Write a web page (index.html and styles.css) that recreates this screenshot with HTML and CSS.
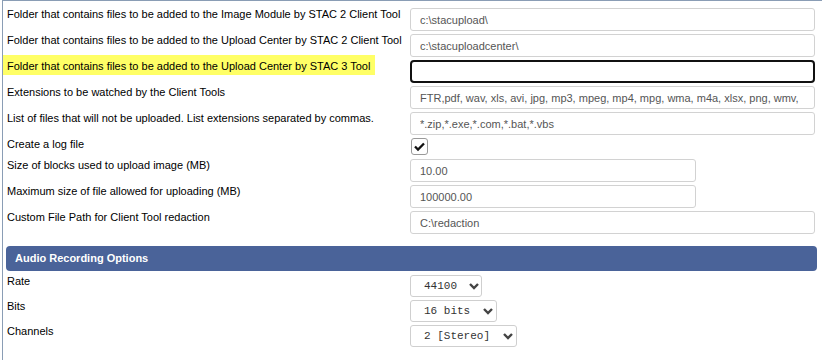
FILE: index.html
```html
<!DOCTYPE html>
<html lang="en">
<head>
    <meta charset="UTF-8">
    <meta name="viewport" content="width=device-width, initial-scale=1.0">
    <link rel="stylesheet" href="styles.css">
    <title>Client Tool Settings</title>
</head>
<body>
    <div class="panel">

        <div class="row">
            <label for="image-folder">Folder that contains files to be added to the Image Module by STAC 2 Client Tool</label>
            <input type="text" id="image-folder" class="field" value="c:\stacupload\">
        </div>

        <div class="row">
            <label for="upload-folder">Folder that contains files to be added to the Upload Center by STAC 2 Client Tool</label>
            <input type="text" id="upload-folder" class="field" value="c:\stacuploadcenter\">
        </div>

        <div class="row">
            <label for="stac3-folder"><span class="highlight">Folder that contains files to be added to the Upload Center by STAC 3 Tool</span></label>
            <input type="text" id="stac3-folder" class="field focused" value="">
        </div>

        <div class="row">
            <label for="watched">Extensions to be watched by the Client Tools</label>
            <input type="text" id="watched" class="field clip" value="FTR,pdf, wav, xls, avi, jpg, mp3, mpeg, mp4, mpg, wma, m4a, xlsx, png, wmv, mov, doc, docx">
        </div>

        <div class="row">
            <label for="excluded">List of files that will not be uploaded. List extensions separated by commas.</label>
            <input type="text" id="excluded" class="field" value="*.zip,*.exe,*.com,*.bat,*.vbs">
        </div>

        <div class="row row-check">
            <label>Create a log file</label>
            <span class="check">
                <svg width="17" height="17" viewBox="0 0 17 17"><path d="M4 8.5 L7 11.5 L13 5.5" fill="none" stroke="#111" stroke-width="2.3"/></svg>
            </span>
        </div>

        <div class="row">
            <label for="block-size">Size of blocks used to upload image (MB)</label>
            <input type="text" id="block-size" class="field short" value="10.00">
        </div>

        <div class="row">
            <label for="max-size">Maximum size of file allowed for uploading (MB)</label>
            <input type="text" id="max-size" class="field short" value="100000.00">
        </div>

        <div class="row">
            <label for="redaction">Custom File Path for Client Tool redaction</label>
            <input type="text" id="redaction" class="field" value="C:\redaction">
        </div>

        <div class="section-head">Audio Recording Options</div>

        <div class="row row-select">
            <label for="rate">Rate</label>
            <span class="select-wrap rate">
                <select id="rate"><option>44100</option><option>22050</option></select>
                <svg class="chev" width="10" height="7" viewBox="0 0 10 7"><path d="M1 1 L5 5 L9 1" fill="none" stroke="#444" stroke-width="2.4"/></svg>
            </span>
        </div>

        <div class="row row-select">
            <label for="bits">Bits</label>
            <span class="select-wrap bits">
                <select id="bits"><option>16 bits</option><option>8 bits</option></select>
                <svg class="chev" width="10" height="7" viewBox="0 0 10 7"><path d="M1 1 L5 5 L9 1" fill="none" stroke="#444" stroke-width="2.4"/></svg>
            </span>
        </div>

        <div class="row row-select">
            <label for="channels">Channels</label>
            <span class="select-wrap channels">
                <select id="channels"><option>2 [Stereo]</option><option>1 [Mono]</option></select>
                <svg class="chev" width="10" height="7" viewBox="0 0 10 7"><path d="M1 1 L5 5 L9 1" fill="none" stroke="#444" stroke-width="2.4"/></svg>
            </span>
        </div>

    </div>
</body>
</html>
```

FILE: styles.css
```css
* {
  box-sizing: border-box;
  margin: 0;
  padding: 0;
}

body {
  font-family: "Liberation Sans", Arial, sans-serif;
  font-size: 11px;
  color: #000;
  background: #fff;
}

.panel {
  margin-left: 2px;
  height: 360px;
  border-left: 1px solid #8a9db5;
  border-top: 1px solid #8a9db5;
  padding: 7px 7px 0 4px;
}

.row {
  display: grid;
  grid-template-columns: 403px 1fr;
  align-items: start;
  margin-bottom: 3px;
}

.row label {
  line-height: 13px;
  white-space: nowrap;
}

.highlight {
  display: inline-block;
  background: #ffff66;
  margin: -5px 0 0 -4px;
  padding: 5px 5px 2px 4px;
}

.field {
  font-family: "Liberation Sans", Arial, sans-serif;
  font-size: 11px;
  color: #555;
  height: 23px;
  width: 100%;
  border: 1px solid #d2d2d2;
  border-radius: 3px;
  padding: 0 8px 0 9px;
  background: #fff;
  outline: none;
}

.field.clip {
  padding-right: 13px;
}

.field.short {
  width: 286px;
}

.field.focused {
  border: 2px solid #111;
  border-radius: 4px;
}

.row-check {
  height: 18px;
}

.check {
  display: block;
  width: 17px;
  height: 17px;
  margin-left: 1px;
  border: 1px solid #9a9a9a;
  border-radius: 3px;
  position: relative;
}

.check svg {
  position: absolute;
  left: -1px;
  top: -1px;
}

.section-head {
  margin: 12px -2px 4px -1px;
  height: 25px;
  line-height: 24px;
  padding-left: 9px;
  background: #4a6399;
  color: #fff;
  font-weight: bold;
  border-radius: 4px;
}

.row-select {
  margin-bottom: 3px;
}

.select-wrap {
  position: relative;
  display: block;
  height: 22px;
}

.select-wrap select {
  appearance: none;
  -webkit-appearance: none;
  font-family: "Liberation Mono", "Courier New", monospace;
  font-size: 11px;
  color: #333;
  height: 22px;
  padding: 0 0 0 13px;
  border: 1px solid #cfcfcf;
  border-radius: 3px;
  background: #fff;
  outline: none;
}

.rate select {
  width: 72px;
}

.bits select {
  width: 87px;
}

.channels select {
  width: 107px;
}

.chev {
  position: absolute;
  top: 8px;
  pointer-events: none;
}

.rate .chev {
  left: 59px;
}

.bits .chev {
  left: 73px;
}

.channels .chev {
  left: 93px;
}
```
